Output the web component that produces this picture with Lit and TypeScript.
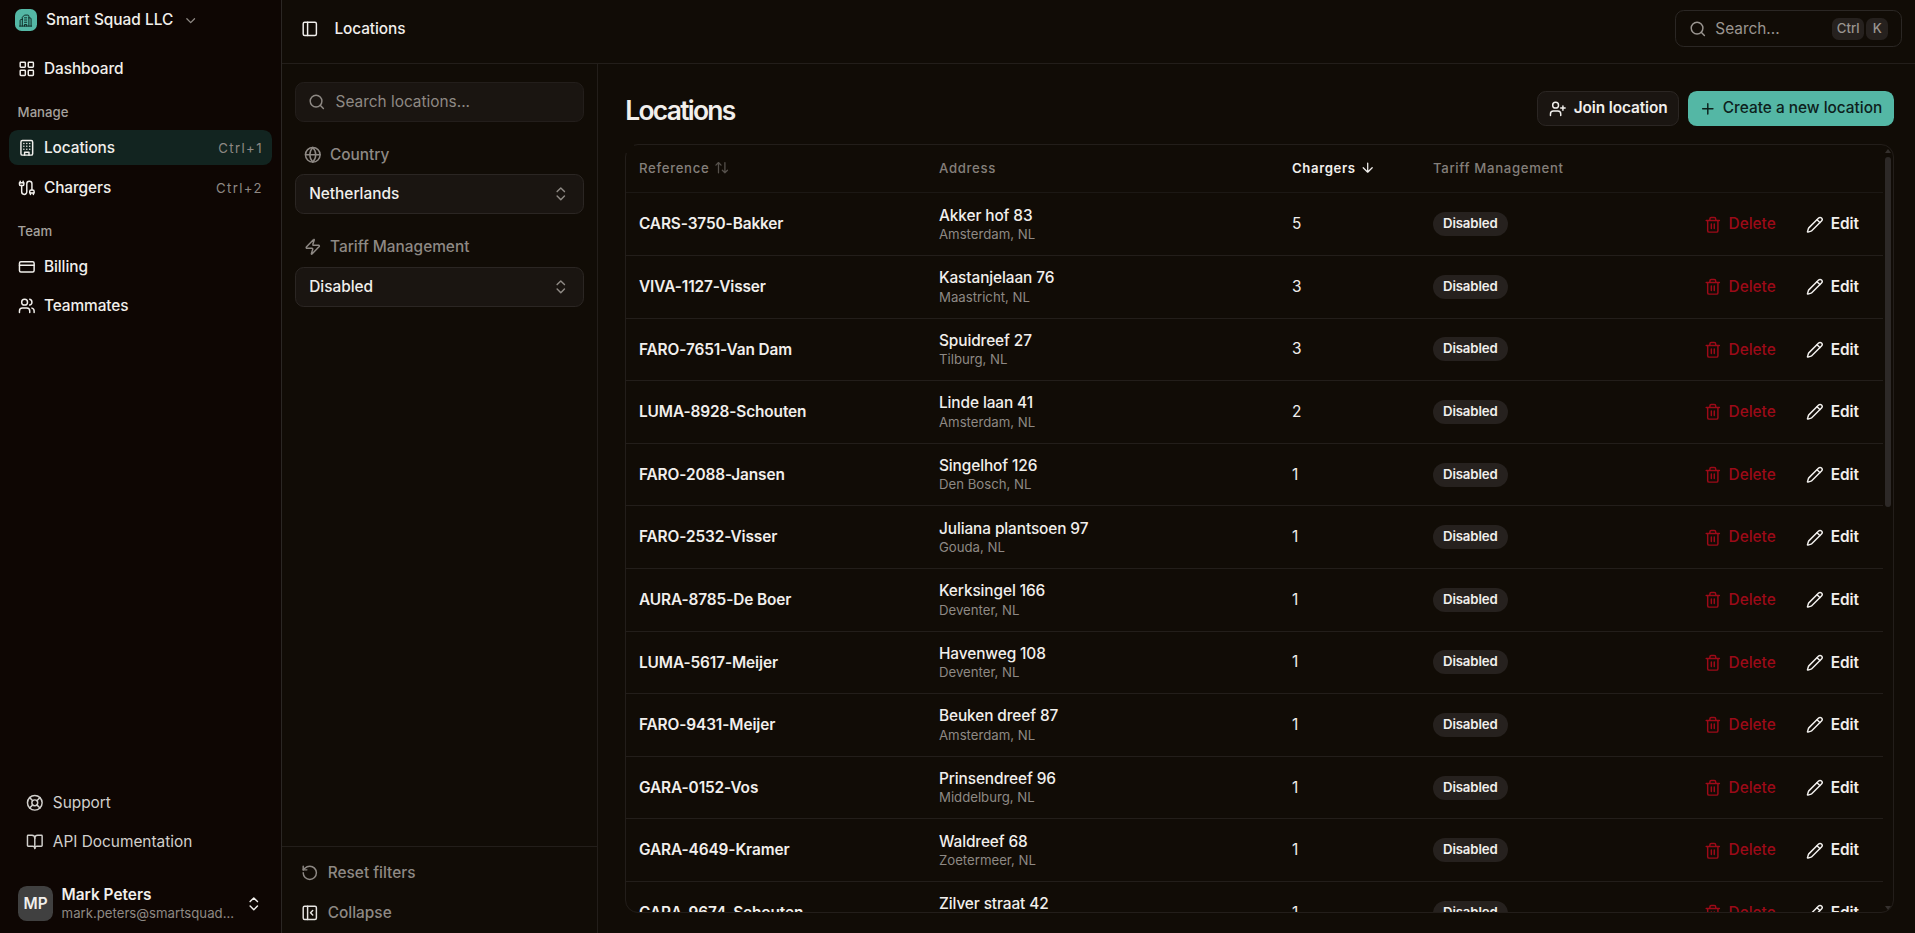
import { LitElement, html, svg, css, nothing } from "lit";
import { customElement, property } from "lit/decorators.js";

const ICONS: Record<string, unknown> = {
  grid: svg`<rect width="7" height="7" x="3" y="3" rx="1"/><rect width="7" height="7" x="14" y="3" rx="1"/><rect width="7" height="7" x="14" y="14" rx="1"/><rect width="7" height="7" x="3" y="14" rx="1"/>`,
  building: svg`<rect width="16" height="20" x="4" y="2" rx="2"/><path d="M9 22v-4h6v4M8 6h.01M16 6h.01M12 6h.01M12 10h.01M12 14h.01M16 10h.01M16 14h.01M8 10h.01M8 14h.01"/>`,
  offices: svg`<path d="M1 22h22M6 22V6l4-4h6a2 2 0 0 1 2 2v18"/><path d="M6 10H4a2 2 0 0 0-2 2v10M18 7h2a2 2 0 0 1 2 2v13"/><path d="M10 7h4M10 11h4M10 15h4M10 22v-3h4v3"/>`,
  cable: svg`<path d="M4 9a2 2 0 0 1-2-2V5h6v2a2 2 0 0 1-2 2Z"/><path d="M3 5V3M7 5V3"/><path d="M19 15V6.5a3.5 3.5 0 0 0-7 0v11a3.5 3.5 0 0 1-7 0V9"/><path d="M17 21v-2M21 21v-2"/><path d="M22 19h-6v-2a2 2 0 0 1 2-2h2a2 2 0 0 1 2 2Z"/>`,
  card: svg`<rect width="20" height="14" x="2" y="5" rx="2"/><path d="M2 10h20"/>`,
  users: svg`<path d="M16 21v-2a4 4 0 0 0-4-4H6a4 4 0 0 0-4 4v2"/><circle cx="9" cy="7" r="4"/><path d="M22 21v-2a4 4 0 0 0-3-3.87M16 3.13a4 4 0 0 1 0 7.75"/>`,
  buoy: svg`<circle cx="12" cy="12" r="10"/><path d="m4.93 4.93 4.24 4.24M14.83 9.17l4.24-4.24M14.83 14.83l4.24 4.24M9.17 14.83l-4.24 4.24"/><circle cx="12" cy="12" r="4"/>`,
  book: svg`<path d="M12 7v14"/><path d="M3 18a1 1 0 0 1-1-1V4a1 1 0 0 1 1-1h5a4 4 0 0 1 4 4 4 4 0 0 1 4-4h5a1 1 0 0 1 1 1v13a1 1 0 0 1-1 1h-6a3 3 0 0 0-3 3 3 3 0 0 0-3-3z"/>`,
  updown: svg`<path d="m7 15 5 5 5-5M7 9l5-5 5 5"/>`,
  down: svg`<path d="m6 9 6 6 6-6"/>`,
  reset: svg`<path d="M3 12a9 9 0 1 0 9-9 9.75 9.75 0 0 0-6.74 2.74L3 8"/><path d="M3 3v5h5"/>`,
  panel: svg`<rect width="18" height="18" x="3" y="3" rx="2"/><path d="M9 3v18"/>`,
  panelClose: svg`<rect width="18" height="18" x="3" y="3" rx="2"/><path d="M9 3v18M16 15l-3-3 3-3"/>`,
  search: svg`<circle cx="11" cy="11" r="8"/><path d="m21 21-4.3-4.3"/>`,
  globe: svg`<circle cx="12" cy="12" r="10"/><path d="M12 2a14.5 14.5 0 0 0 0 20 14.5 14.5 0 0 0 0-20M2 12h20"/>`,
  zap: svg`<path d="M4 14a1 1 0 0 1-.78-1.63l9.9-10.2a.5.5 0 0 1 .86.46l-1.92 6.02A1 1 0 0 0 13 10h7a1 1 0 0 1 .78 1.63l-9.9 10.2a.5.5 0 0 1-.86-.46l1.92-6.02A1 1 0 0 0 11 14z"/>`,
  userPlus: svg`<path d="M16 21v-2a4 4 0 0 0-4-4H6a4 4 0 0 0-4 4v2"/><circle cx="9" cy="7" r="4"/><path d="M19 8v6M22 11h-6"/>`,
  plus: svg`<path d="M5 12h14M12 5v14"/>`,
  trash: svg`<path d="M3 6h18M19 6v14a2 2 0 0 1-2 2H7a2 2 0 0 1-2-2V6M8 6V4a2 2 0 0 1 2-2h4a2 2 0 0 1 2 2v2M10 11v6M14 11v6"/>`,
  pencil: svg`<path d="M21.174 6.812a1 1 0 0 0-3.986-3.987L3.842 16.174a2 2 0 0 0-.5.83l-1.321 4.352a.5.5 0 0 0 .623.622l4.353-1.32a2 2 0 0 0 .83-.497z"/><path d="m15 5 4 4"/>`,
  arrowDown: svg`<path d="M12 5v14M19 12l-7 7-7-7"/>`,
  sort: svg`<path d="m21 16-4 4-4-4M17 20V4M3 8l4-4 4 4M7 4v16"/>`,
};

@customElement("ui-icon")
class UiIcon extends LitElement {
  @property() name = "";
  @property({ type: Number }) stroke = 2;
  static styles = css`
    :host { display: inline-flex; flex: none; width: 17.6px; height: 17.6px; }
    .i { width: 100%; height: 100%; fill: none; stroke: currentColor; stroke-linecap: round; stroke-linejoin: round; }
  `;
  render() {
    return html`<svg class="i" viewBox="0 0 24 24" stroke-width=${this.stroke}>${ICONS[this.name]}</svg>`;
  }
}

const ROWS: [string, string, string, number][] = [
  ["CARS-3750-Bakker", "Akker hof 83", "Amsterdam, NL", 5],
  ["VIVA-1127-Visser", "Kastanjelaan 76", "Maastricht, NL", 3],
  ["FARO-7651-Van Dam", "Spuidreef 27", "Tilburg, NL", 3],
  ["LUMA-8928-Schouten", "Linde laan 41", "Amsterdam, NL", 2],
  ["FARO-2088-Jansen", "Singelhof 126", "Den Bosch, NL", 1],
  ["FARO-2532-Visser", "Juliana plantsoen 97", "Gouda, NL", 1],
  ["AURA-8785-De Boer", "Kerksingel 166", "Deventer, NL", 1],
  ["LUMA-5617-Meijer", "Havenweg 108", "Deventer, NL", 1],
  ["FARO-9431-Meijer", "Beuken dreef 87", "Amsterdam, NL", 1],
  ["GARA-0152-Vos", "Prinsendreef 96", "Middelburg, NL", 1],
  ["GARA-4649-Kramer", "Waldreef 68", "Zoetermeer, NL", 1],
  ["GARA-9674-Schouten", "Zilver straat 42", "Utrecht, NL", 1],
];

@customElement("app-root")
class AppRoot extends LitElement {
  static styles = css`
    * { box-sizing: border-box; }
    :host {
      display: flex; width: 100vw; height: 100vh; overflow: hidden;
      font: 400 15.4px/22px Inter, "Liberation Sans", sans-serif;
      color: #f1efec; background: #110c06;
      --muted: #8e8984; --line: #231e1a; --field: #1a1511;
    }
    .side { width: 281.6px; flex: none; background: #0e0603; border-right: 1px solid #2b2724; display: flex; flex-direction: column; }
    .org { display: flex; align-items: center; height: 22px; margin: 9px 0 0 15px; font-weight: 500; }
    .logo { width: 22px; height: 22px; border-radius: 6.6px; background: #54b7a5; color: #0e2a25; display: flex; align-items: center; justify-content: center; margin-right: 9px; }
    .logo ui-icon { width: 13.2px; height: 13.2px; margin-top: 1px; }
    .org .chev { width: 15.4px; height: 15.4px; color: var(--muted); margin: 1px 0 0 10px; }
    .nav { display: flex; flex-direction: column; gap: 4.8px; padding: 0 8.8px; }
    .nav.top { margin-top: 20px; }
    .item { height: 35.2px; display: flex; align-items: center; gap: 8.8px; padding: 0 8.8px; border-radius: 8.8px; font-weight: 500; letter-spacing: -0.08px; }
    .item.on { background: #122420; }
    .kbd { margin-left: auto; font-size: 13.2px; font-weight: 400; letter-spacing: 1.4px; color: var(--muted); }
    .group { height: 35.2px; display: flex; align-items: center; padding: 0 0 1.4px 17.6px; font-size: 13.2px; font-weight: 500; color: #a5a19d; margin-top: 8.8px; }
    .group.team { margin-top: 8.6px; padding-bottom: 1px; }
    .team + .nav { gap: 4px; }
    .low { margin-top: auto; padding: 0 17.6px; display: flex; flex-direction: column; gap: 4.4px; color: #d2d0cd; }
    .low .item { font-weight: 400; height: 35px; letter-spacing: 0; }
    .user { display: flex; align-items: center; margin: 26.6px 0 11.8px; padding-left: 18px; height: 35.2px; }
    .ava { width: 35.2px; height: 35.2px; flex: none; border-radius: 8.8px; background: #404040; display: flex; align-items: center; justify-content: center; font-weight: 600; }
    .who { margin-left: 8.4px; width: 176px; line-height: 18.6px; }
    .who .n { font-weight: 600; padding-top: 1px; }
    .who .e { font-size: 13.2px; color: var(--muted); margin-top: -1px; }
    .user ui-icon { margin-left: 7.6px; }

    .main { flex: 1; min-width: 0; display: flex; flex-direction: column; }
    .bar { height: 64px; flex: none; border-bottom: 1px solid var(--line); display: flex; align-items: flex-start; padding: 10px 13.2px 0 19.4px; font-weight: 500; }
    .crumb { display: flex; align-items: center; height: 37px; gap: 15.8px; letter-spacing: -0.08px; }
    .crumb span { padding-top: 1px; }
    .find { margin-left: auto; width: 227px; height: 37px; border: 1px solid #2b2724; border-radius: 8.8px; display: flex; align-items: center; padding: 0 12.6px 0 13.6px; color: #9a9590; font-weight: 400; }
    .find ui-icon { margin-right: 8.3px; }
    .find .keys { margin-left: auto; display: flex; gap: 2px; }
    .key { height: 22px; border-radius: 6.6px; background: #26211e; font-size: 13.2px; font-weight: 500; padding: 0 4.6px; min-width: 22px; text-align: center; line-height: 21px; }
    .body { flex: 1; min-height: 0; display: flex; }

    .filters { width: 316.8px; flex: none; border-right: 1px solid var(--line); display: flex; flex-direction: column; }
    .fset { padding: 18px 13.2px 0; color: var(--muted); }
    .field { height: 39.6px; border: 1px solid #2b2623; border-radius: 8.8px; background: var(--field); display: flex; align-items: center; padding: 0 12.2px; }
    .field.q { gap: 10px; border-color: #231e1b; }
    .field.sel { color: #f1efec; padding: 0 14px 0 13.4px; justify-content: space-between; font-weight: 500; }
    .field.sel ui-icon { color: var(--muted); }
    .lab { display: flex; align-items: center; gap: 8.8px; height: 22px; padding-left: 8.8px; font-weight: 500; }
    .lab.a { margin: 22.6px 0 8.2px; }
    .lab.b { margin: 22px 0 9.2px; }
    .ffoot { margin-top: auto; height: 86.6px; border-top: 1px solid var(--line); padding: 14.6px 0 0 19.2px; display: flex; flex-direction: column; gap: 18px; color: var(--muted); font-weight: 500; }
    .ffoot div { display: flex; align-items: center; gap: 9.4px; }
    .ffoot .w { color: #e8e6e3; }

    .page { flex: 1; min-width: 0; padding: 27px 20.8px 20px 26.8px; display: flex; flex-direction: column; }
    .head { display: flex; align-items: center; height: 35.2px; }
    h1 { margin: 2px auto 0 0; font: 600 26.4px/32px Inter, sans-serif; font-variation-settings: "opsz" 32; letter-spacing: -1.7px; }
    .btn { height: 35.2px; border-radius: 8.8px; display: flex; align-items: center; gap: 7px; font-weight: 600; }
    .join { width: 142px; border: 1px solid #2b2623; background: var(--field); padding-left: 11px; margin-right: 9px; letter-spacing: -0.12px; }
    .create { width: 206px; background: #54b7a5; color: #0d211c; font-weight: 500; padding-left: 11px; gap: 6px; }
    .btn span { margin-top: -2px; }
    .wrap { position: relative; flex: 1; min-height: 0; margin-top: 17.8px; }
    .tbl { height: 100%; border: 1px solid var(--line); border-radius: 13px; overflow: hidden; padding-right: 10px; }
    .mask { position: absolute; z-index: 1; left: -1px; top: -1px; width: 10px; height: 10px; background: #110c06; }
    .row { display: grid; grid-template-columns: 300px 353px 141px 1fr auto; align-items: center; height: 62.6px; padding: 0 16.6px 0 12.8px; border-bottom: 1px solid var(--line); }
    .th { height: 48.4px; font-size: 13.2px; font-weight: 500; letter-spacing: 0.66px; color: #847f7a; border-color: #1c1814; padding-bottom: 1px; }
    .th div { display: flex; align-items: center; gap: 5px; }
    .th ui-icon { width: 15.4px; height: 15.4px; }
    .th .dim { opacity: .6; margin-left: -.6px; }
    .th .on { color: #f1efec; font-weight: 600; gap: 4.4px; letter-spacing: 0.6px; }
    .ref { font-weight: 600; letter-spacing: -0.11px; padding-top: .4px; }
    .adr { line-height: 19.4px; font-weight: 500; letter-spacing: -0.1px; padding-top: 1.6px; }
    .adr .c { font-size: 13.2px; color: var(--muted); font-weight: 400; letter-spacing: 0; }
    .badge { display: inline-block; height: 24px; line-height: 23px; padding: 0 10px; border-radius: 12px; background: #26211e; font-size: 13.2px; font-weight: 600; letter-spacing: -0.12px; vertical-align: middle; }
    .act { display: flex; align-items: center; font-weight: 600; padding-top: .4px; }
    .act .del { display: flex; align-items: center; color: #9c0a18; font-weight: 500; gap: 7.2px; margin-right: 30.6px; }
    .act .ed { display: flex; align-items: center; gap: 6.7px; margin-right: 7.6px; }
    .scroll { position: absolute; right: 3px; top: 5px; bottom: 3px; width: 6px; display: flex; flex-direction: column; align-items: center; }
    .up { width: 0; border: 3px solid transparent; border-top: 0; border-bottom: 4px solid #35302d; }
    .dn { width: 0; border: 3px solid transparent; border-bottom: 0; border-top: 4px solid #35302d; margin-top: auto; }
    .thumb { width: 6px; height: 350px; margin-top: 4px; border-radius: 3px; background: #2d2927; }
  `;

  item(icon: string, label: string, key = "", on = false) {
    return html`<div class="item ${on ? "on" : ""}"><ui-icon name=${icon}></ui-icon><span>${label}</span>${key ? html`<span class="kbd">${key}</span>` : nothing}</div>`;
  }

  render() {
    return html`
      <aside class="side">
        <div class="org"><span class="logo"><ui-icon name="offices" stroke="1.8"></ui-icon></span>Smart Squad LLC<ui-icon class="chev" name="down"></ui-icon></div>
        <nav class="nav top">${this.item("grid", "Dashboard")}</nav>
        <div class="group">Manage</div>
        <nav class="nav">${this.item("building", "Locations", "Ctrl+1", true)}${this.item("cable", "Chargers", "Ctrl+2")}</nav>
        <div class="group team">Team</div>
        <nav class="nav">${this.item("card", "Billing")}${this.item("users", "Teammates")}</nav>
        <div class="low">${this.item("buoy", "Support")}${this.item("book", "API Documentation")}</div>
        <div class="user">
          <span class="ava">MP</span>
          <div class="who"><div class="n">Mark Peters</div><div class="e">mark.peters@smartsquad...</div></div>
          <ui-icon name="updown"></ui-icon>
        </div>
      </aside>
      <div class="main">
        <header class="bar">
          <div class="crumb"><ui-icon name="panel"></ui-icon><span>Locations</span></div>
          <div class="find"><ui-icon name="search"></ui-icon><span>Search...</span><span class="keys"><span class="key">Ctrl</span><span class="key">K</span></span></div>
        </header>
        <div class="body">
          <section class="filters">
            <div class="fset">
              <div class="field q"><ui-icon name="search"></ui-icon><span>Search locations...</span></div>
              <div class="lab a"><ui-icon name="globe"></ui-icon>Country</div>
              <div class="field sel">Netherlands<ui-icon name="updown"></ui-icon></div>
              <div class="lab b"><ui-icon name="zap"></ui-icon>Tariff Management</div>
              <div class="field sel">Disabled<ui-icon name="updown"></ui-icon></div>
            </div>
            <div class="ffoot">
              <div><ui-icon name="reset"></ui-icon>Reset filters</div>
              <div><ui-icon class="w" name="panelClose"></ui-icon>Collapse</div>
            </div>
          </section>
          <main class="page">
            <div class="head">
              <h1>Locations</h1>
              <div class="btn join"><ui-icon name="userPlus"></ui-icon><span>Join location</span></div>
              <div class="btn create"><ui-icon name="plus"></ui-icon><span>Create a new location</span></div>
            </div>
            <div class="wrap">
              <div class="mask"></div>
              <div class="tbl">
                <div class="row th">
                  <div>Reference<ui-icon class="dim" name="sort"></ui-icon></div>
                  <div>Address</div>
                  <div class="on">Chargers<ui-icon name="arrowDown"></ui-icon></div>
                  <div>Tariff Management</div>
                </div>
                ${ROWS.map(([ref, street, city, n]) => html`
                  <div class="row">
                    <div class="ref">${ref}</div>
                    <div class="adr"><div>${street}</div><div class="c">${city}</div></div>
                    <div>${n}</div>
                    <div><span class="badge">Disabled</span></div>
                    <div class="act">
                      <span class="del"><ui-icon name="trash"></ui-icon>Delete</span>
                      <span class="ed"><ui-icon name="pencil"></ui-icon>Edit</span>
                    </div>
                  </div>`)}
              </div>
              <div class="scroll"><i class="up"></i><i class="thumb"></i><i class="dn"></i></div>
            </div>
          </main>
        </div>
      </div>`;
  }
}
